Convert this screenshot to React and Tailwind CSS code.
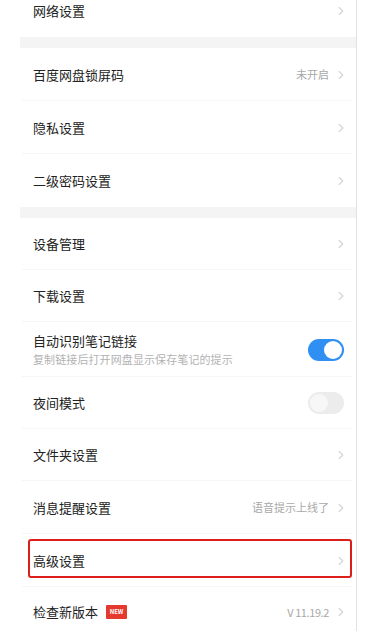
import React from 'react';

const Chevron = () => (
  <svg width="6" height="10" viewBox="0 0 6 10" className="shrink-0">
    <polyline points="1.2,1.5 4.8,5 1.2,8.5" fill="none" stroke="#d4d4d4" strokeWidth="1.1" strokeLinecap="round" strokeLinejoin="round" />
  </svg>
);

const Toggle = ({ on }) => (
  <div
    className={
      on
        ? 'w-[36px] h-[22px] rounded-full bg-[#2f8ff2] flex items-center justify-end pr-[2px]'
        : 'w-[36px] h-[22px] rounded-full bg-[#ececec] flex items-center justify-start pl-[2px]'
    }
  >
    <div className={on ? 'w-[18px] h-[18px] rounded-full bg-white' : 'w-[18px] h-[18px] rounded-full bg-[#f7f7f7]'} />
  </div>
);

const Row = ({ title, value, valueClass, h, children, last }) => (
  <div className={`relative flex items-center justify-between pl-[13px] pr-[12px] ${h}`}>
    <div className="flex items-center">
      <span className="text-[13px] leading-[18px] text-[#222]">{title}</span>
      {children}
    </div>
    <div className="flex items-center gap-[9px]">
      {value && <span className={`text-[11px] text-[#a8a8a8] ${valueClass || ''}`}>{value}</span>}
      <Chevron />
    </div>
    {!last && <div className="absolute left-[2px] right-[4px] bottom-0 h-px bg-[#f6f6f6]" />}
  </div>
);

const Gap = () => <div className="h-[11px] bg-[#f4f4f4]" />;

export default function App() {
  return (
    <div
      className="w-[380px] h-[631px] overflow-hidden bg-white"
      style={{ fontFamily: '"Noto Sans CJK SC", "Noto Sans", sans-serif' }}
    >
      <div className="ml-[20px] w-[337px] border-r border-[#e2e2e2] -mt-[15px] min-h-[660px]">
        <Row title="网络设置" h="h-[52px]" last />
        <Gap />
        <Row title="百度网盘锁屏码" value="未开启" h="h-[53px]" />
        <Row title="隐私设置" h="h-[53px]" />
        <Row title="二级密码设置" h="h-[53px]" last />
        <Gap />
        <Row title="设备管理" h="h-[52px]" />
        <Row title="下载设置" h="h-[52px]" />
        <div className="relative flex items-center justify-between pl-[13px] pr-[12px] h-[55px]">
          <div className="flex flex-col">
            <span className="text-[13px] leading-[18px] text-[#222]">自动识别笔记链接</span>
            <span className="text-[11px] leading-[15px] text-[#b3b3b3] mt-[2px] tracking-[0.1px]">复制链接后打开网盘显示保存笔记的提示</span>
          </div>
          <Toggle on />
          <div className="absolute left-[2px] right-[4px] bottom-0 h-px bg-[#f6f6f6]" />
        </div>
        <div className="relative flex items-center justify-between pl-[13px] pr-[12px] h-[52px]">
          <span className="text-[13px] leading-[18px] text-[#222]">夜间模式</span>
          <Toggle />
          <div className="absolute left-[2px] right-[4px] bottom-0 h-px bg-[#f6f6f6]" />
        </div>
        <Row title="文件夹设置" h="h-[52px]" />
        <Row title="消息提醒设置" value="语音提示上线了" h="h-[53px]" />
        <div className="relative">
          <Row title="高级设置" h="h-[53px]" />
          <div className="absolute left-[8px] right-[4px] top-[5px] bottom-[9px] border-[2.5px] border-[#dc1f1a] rounded-[3px]" />
        </div>
        <Row title="检查新版本" value="V 11.19.2" valueClass="tracking-[-0.4px]" h="h-[50px]" last>
          <span className="ml-[8px] w-[21px] h-[14px] bg-[#e5392e] rounded-[1px] flex items-center justify-center text-[6px] font-bold text-white leading-none">
            NEW
          </span>
        </Row>
      </div>
    </div>
  );
}
